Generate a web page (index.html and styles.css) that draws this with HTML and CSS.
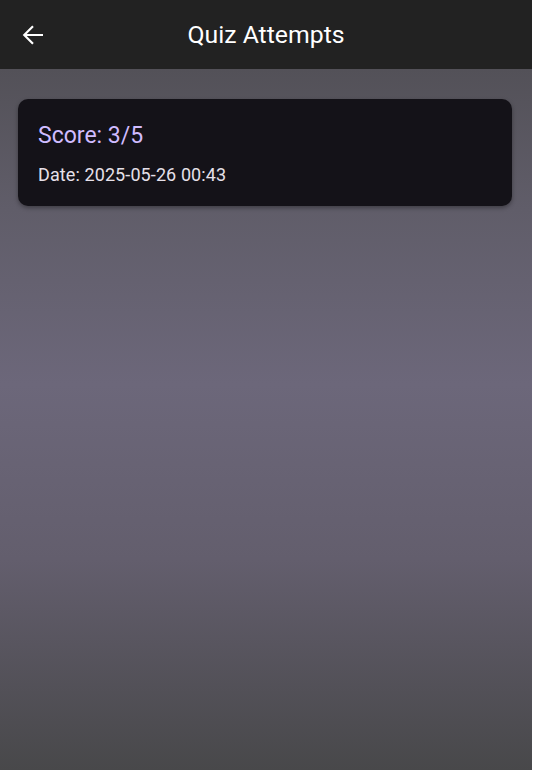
FILE: index.html
```html
<!DOCTYPE html>
<html lang="en">
<head>
<meta charset="utf-8">
<title>Quiz Attempts</title>
<link rel="stylesheet" href="styles.css">
</head>
<body>
<div class="app">
  <header class="appbar">
    <button class="back" aria-label="Back">
      <svg viewBox="0 0 24 24" width="30" height="30"><path fill="none" stroke="#ffffff" stroke-width="1.75" d="M20 12H5.5M12 5l-7 7 7 7"/></svg>
    </button>
    <h1 class="title">Quiz Attempts</h1>
  </header>
  <main class="content">
    <section class="card">
      <div class="score">Score: 3/5</div>
      <div class="date">Date: 2025-05-26 00:43</div>
    </section>
  </main>
</div>
</body>
</html>
```

FILE: styles.css
```css
html, body {
  margin: 0;
  padding: 0;
  background: #ffffff;
}
body {
  font-family: Roboto, "Liberation Sans", sans-serif;
}
.app {
  width: 532px;
  height: 770px;
  display: flex;
  flex-direction: column;
}
.appbar {
  height: 69px;
  flex: 0 0 69px;
  background: #222222;
  display: flex;
  align-items: center;
  position: relative;
}
.back {
  background: none;
  border: 0;
  padding: 0;
  margin-left: 18px;
  width: 30px;
  height: 30px;
  display: flex;
}
.title {
  position: absolute;
  left: 0;
  right: 0;
  top: 0;
  height: 69px;
  margin: 0;
  line-height: 69px;
  text-align: center;
  font-weight: 400;
  font-size: 24.8px;
  color: #ffffff;
  pointer-events: none;
}
.content {
  flex: 1;
  background: linear-gradient(180deg, #535158 0%, #605d69 20%, #6c677a 45%, #635e6d 70%, #48484a 100%);
  padding: 30px 20px 0 18px;
}
.card {
  background: #141218;
  border-radius: 10px;
  box-shadow: 0 2px 4px rgba(0, 0, 0, 0.35);
  padding: 22px 20px 0 20px;
  height: 85px;
}
.score {
  color: #d0bcff;
  font-size: 23px;
  line-height: 30px;
}
.date {
  color: #e6e0e9;
  font-size: 18px;
  letter-spacing: 0.1px;
  line-height: 22px;
  margin-top: 13px;
}
```
